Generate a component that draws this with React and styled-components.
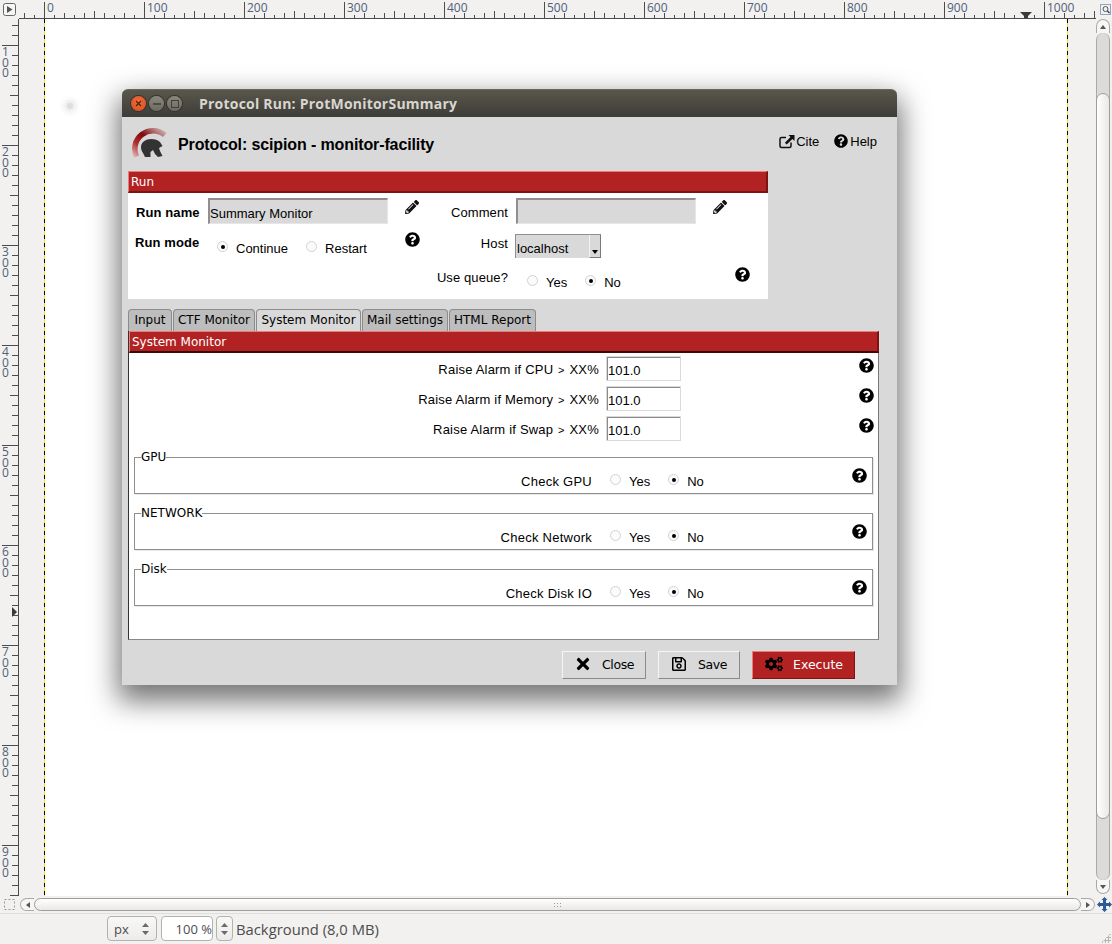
import React from "react";
import styled, { createGlobalStyle } from "styled-components";
import {
  FaPencilAlt,
  FaQuestionCircle,
  FaTimes,
  FaRegSave,
  FaCogs,
} from "react-icons/fa";

const GlobalStyle = createGlobalStyle`
  html, body { margin: 0; padding: 0; background: #f2f1f0; }
  body { font-family: "Liberation Sans", Arial, sans-serif; overflow: hidden; }
`;

const GIMP_FONT = `"Open Sans", "Noto Sans", sans-serif`;
const TK_FONT = `"DejaVu Sans", sans-serif`;
const RED = "#b22222";

const Gimp = styled.div`
  width: 1112px;
  height: 944px;
  display: flex;
  flex-direction: column;
  background: #f2f1f0;
  position: relative;
  overflow: hidden;
`;

const TopRow = styled.div`
  display: flex;
  height: 19px;
  flex: none;
`;

const CornerButton = styled.div`
  width: 19px;
  flex: none;
  display: flex;
  align-items: center;
  justify-content: center;
`;

const RulerBox = styled.div`
  flex: none;
  line-height: 0;
`;

// one digit per line, like the vertical ruler in the screenshot
const RulerDigits = styled.div`
  font: 12px/10.7px ${GIMP_FONT};
  color: #4f6078;
  word-break: break-all;
`;

const Middle = styled.div`
  display: flex;
  height: 877px;
  flex: none;
`;

const Gutter = styled.div`
  flex: none;
  width: ${({ $w }) => $w}px;
  background: #f2f1f0;
`;

const Canvas = styled.div`
  flex: none;
  width: 1024px;
  position: relative;
  background: #fff;
`;

const Guide = styled.div`
  position: absolute;
  top: 0;
  bottom: 0;
  ${({ $side }) => $side}: 0;
  width: 1px;
  background: repeating-linear-gradient(
    to bottom,
    #000 0 4px,
    #f6e500 4px 8px
  );
`;

const ShadowSpot = styled.div`
  position: absolute;
  left: 23px;
  top: 84px;
  width: 6px;
  height: 6px;
  border-radius: 50%;
  background: #dedede;
  box-shadow: 0 0 6px 3px #e4e4e4;
`;

const Window = styled.div`
  position: absolute;
  left: 78px;
  top: 70px;
  width: 775px;
  height: 596px;
  display: flex;
  flex-direction: column;
  background: #d9d9d9;
  border-radius: 6px 6px 0 0;
  box-shadow: 0 12px 28px 4px rgba(0, 0, 0, 0.55);
  color: #000;
`;

const TitleBar = styled.div`
  height: 28px;
  flex: none;
  display: flex;
  align-items: center;
  padding-left: 9px;
  background: linear-gradient(to bottom, #5a564c, #3d3c37);
  border-radius: 6px 6px 0 0;
  border-top: 1px solid #6a665b;
  box-sizing: border-box;
`;

const WinButton = styled.div`
  width: 15px;
  height: 15px;
  border-radius: 50%;
  margin-right: 3px;
  display: flex;
  align-items: center;
  justify-content: center;
  background: ${({ $close }) =>
    $close
      ? "radial-gradient(circle at 50% 40%, #f0703c, #d8481c)"
      : "linear-gradient(to bottom, #8a877d, #6d6a60)"};
  box-shadow: 0 0 0 1px #35342f;
`;

const WinTitle = styled.div`
  margin-left: 14px;
  font: bold 14px ${GIMP_FONT};
  color: #d8d6cf;
  letter-spacing: 0.22px;
`;

const Body = styled.div`
  flex: none;
  display: flex;
  flex-direction: column;
  padding: 0 18px 0 6px;
`;

const Header = styled.div`
  height: 54px;
  flex: none;
  display: flex;
  align-items: center;
  position: relative;
`;

const LogoBox = styled.div`
  margin-left: 3px;
  line-height: 0;
  svg { display: block; }
`;

const ProtocolTitle = styled.div`
  margin-left: 9px;
  font-size: 16px;
  font-weight: bold;
  letter-spacing: -0.12px;
  position: relative;
  top: 1px;
`;

const HeaderLinks = styled.div`
  margin-left: auto;
  display: flex;
  align-items: center;
  margin-right: 2px;
  margin-top: -6px;
  font-size: 13px;
  gap: 15px;
`;

const HeaderLink = styled.span`
  display: flex;
  align-items: center;
  gap: ${({ $gap }) => $gap}px;
  svg { display: block; }
`;

const RunSection = styled.div`
  width: 640px;
  flex: none;
`;

const SectionBar = styled.div`
  height: 22px;
  box-sizing: border-box;
  background: ${RED};
  border-top: 1px solid #ee7b7b;
  border-left: 1px solid #ee7b7b;
  border-bottom: 2px solid #7c1414;
  border-right: 2px solid #7c1414;
  color: #fff;
  font: 12px/20px ${TK_FONT};
  padding-left: 2px;
`;

const RunForm = styled.div`
  height: 106px;
  background: #fff;
  display: grid;
  grid-template-columns: 73px 180px 48px 80px 180px 48px;
  grid-template-rows: 33px 35px 38px;
  padding: 5px 0 0 7px;
  box-sizing: border-box;
  font-size: 13px;
`;

const Label = styled.div`
  font-weight: ${({ $bold }) => ($bold ? "bold" : "normal")};
  text-align: ${({ $left }) => ($left ? "left" : "right")};
  padding-right: ${({ $left }) => ($left ? 0 : 8)}px;
  padding-left: ${({ $indent }) => $indent || 0}px;
  padding-top: ${({ $top }) => $top || 0}px;
  white-space: nowrap;
  line-height: 15px;
  letter-spacing: 0.1px;
`;

const Entry = styled.div`
  width: 180px;
  height: 26px;
  box-sizing: border-box;
  background: #d9d9d9;
  border-top: 2px solid #8f8f8f;
  border-left: 2px solid #8f8f8f;
  border-right: 1px solid #e6e6e6;
  border-bottom: 1px solid #e6e6e6;
  font-size: 13px;
  line-height: 28px;
  white-space: nowrap;
  overflow: hidden;
`;

const ValueEntry = styled.div`
  width: 75px;
  height: 25px;
  box-sizing: border-box;
  background: #fff;
  border: 1px solid #d9d9d9;
  box-shadow: inset 1px 1px 0 #8a8a8a;
  font-size: 13px;
  line-height: 28px;
  padding-left: 1px;
  overflow: hidden;
`;

const IconCell = styled.div`
  display: flex;
  justify-content: ${({ $end }) => ($end ? "flex-end" : "center")};
  padding-top: ${({ $top }) => $top || 0}px;
  margin-right: ${({ $end }) => ($end ? -6 : 0)}px;
  svg { display: block; }
`;

const RadioGroup = styled.div`
  display: flex;
  align-items: flex-start;
  padding-left: ${({ $pad }) => $pad || 0}px;
  padding-top: ${({ $top }) => $top || 0}px;
  font-size: 13px;
`;

const RadioItem = styled.div`
  display: flex;
  align-items: center;
  margin-right: ${({ $gap }) => $gap || 0}px;
  line-height: 15px;
`;

const RadioDot = styled.span`
  width: 11px;
  height: 11px;
  box-sizing: border-box;
  border-radius: 50%;
  background: #fbfbfb;
  border: 1px solid #d2d2d2;
  margin-right: 8px;
  position: relative;
  top: -2px;
  display: block;
  flex: none;
  &::after {
    content: "";
    display: ${({ $on }) => ($on ? "block" : "none")};
    position: absolute;
    left: 2.5px;
    top: 2.5px;
    width: 4px;
    height: 4px;
    border-radius: 50%;
    background: #000;
  }
`;

const Select = styled.div`
  width: 86px;
  height: 24px;
  margin-left: -1px;
  margin-top: 3px;
  box-sizing: border-box;
  display: flex;
  background: #d9d9d9;
  border-top: 1px solid #8f8f8f;
  border-left: 1px solid #8f8f8f;
`;

const SelectText = styled.div`
  flex: 1;
  line-height: 28px;
  height: 23px;
  overflow: hidden;
  padding-left: 1px;
  font-size: 13px;
`;

const SelectButton = styled.div`
  width: 12px;
  box-sizing: border-box;
  border-left: 1px solid #f4f4f4;
  border-right: 1px solid #7a7a7a;
  border-bottom: 1px solid #7a7a7a;
  background: #d9d9d9;
  position: relative;
  &::after {
    content: "";
    position: absolute;
    left: 2px;
    bottom: 3px;
    width: 0;
    height: 0;
    border-left: 3.5px solid transparent;
    border-right: 3.5px solid transparent;
    border-top: 4px solid #000;
  }
`;

const Tabs = styled.div`
  display: flex;
  margin-top: 10px;
  height: 22px;
  flex: none;
  gap: 1px;
`;

const Tab = styled.div`
  box-sizing: border-box;
  width: ${({ $w }) => $w}px;
  height: 22px;
  text-align: center;
  font: 12px/21px ${TK_FONT};
  background: ${({ $on }) => ($on ? "#d9d9d9" : "#bdbdbd")};
  border: 1px solid #8c8c8c;
  border-bottom: none;
  border-radius: 4px 4px 0 0;
  white-space: nowrap;
`;

const Panel = styled.div`
  width: 751px;
  height: 309px;
  flex: none;
  box-sizing: border-box;
  background: #fff;
  border-left: 1px solid #333;
  border-right: 1px solid #777;
  border-bottom: 1px solid #888;
  display: flex;
  flex-direction: column;
`;

const PanelBar = styled(SectionBar)`
  margin-right: -1px;
  border-bottom: 2px solid #3c0808;
`;

const Params = styled.div`
  padding-top: 3px;
  flex: none;
`;

const ParamRow = styled.div`
  height: 30px;
  flex: none;
  display: grid;
  grid-template-columns: 477px 75px 1fr;
  font-size: 13px;
`;

const ParamLabel = styled.div`
  text-align: right;
  padding: 6px 7px 0 0;
  line-height: 15px;
  letter-spacing: 0.2px;
`;

const Gt = styled.span`
  font-size: 11px;
  margin: 0 1px;
`;

const ParamHelp = styled.div`
  display: flex;
  justify-content: flex-end;
  padding: 2px 4px 0 0;
  svg { display: block; }
`;

const Group = styled.fieldset`
  margin: ${({ $first }) => ($first ? 4 : 12)}px 5px 0 5px;
  padding: 0;
  height: 44px;
  box-sizing: border-box;
  border: 1px solid #8f8f8f;
  border-radius: 0;
  box-shadow: 1px 1px 0 #e8e8e8;
  flex: none;
`;

const GroupLegend = styled.legend`
  margin-left: 6px;
  padding: 0;
  font: 12px/15px ${TK_FONT};
`;

const GroupRow = styled.div`
  display: grid;
  grid-template-columns: 457px auto 1fr;
  font-size: 13px;
  padding-top: 9px;
`;

const GroupLabel = styled.div`
  text-align: right;
  line-height: 15px;
  letter-spacing: 0.25px;
`;

const GroupHelp = styled.div`
  display: flex;
  justify-content: flex-end;
  padding-right: 5px;
  margin-top: -6px;
  svg { display: block; }
`;

const Footer = styled.div`
  flex: none;
  display: flex;
  justify-content: flex-end;
  align-items: flex-start;
  padding: 11px 42px 0 0;
  gap: 12px;
`;

const Button = styled.div`
  display: flex;
  align-items: center;
  box-sizing: border-box;
  height: 28px;
  width: ${({ $w }) => $w}px;
  padding: 0 0 2px ${({ $pad }) => $pad}px;
  font: 12.5px ${TK_FONT};
  letter-spacing: ${({ $tight }) => ($tight ? "-0.4px" : "0")};
  background: ${({ $red }) => ($red ? RED : "#d9d9d9")};
  color: ${({ $red }) => ($red ? "#fff" : "#000")};
  border-top: 1px solid ${({ $red }) => ($red ? "#ee7b7b" : "#f5f5f5")};
  border-left: 1px solid ${({ $red }) => ($red ? "#ee7b7b" : "#f5f5f5")};
  border-bottom: 1px solid ${({ $red }) => ($red ? "#7c1414" : "#8a8a8a")};
  border-right: 1px solid ${({ $red }) => ($red ? "#7c1414" : "#8a8a8a")};
  svg {
    display: block;
    flex: none;
    color: #000;
    margin-right: ${({ $gap }) => $gap}px;
  }
`;

const VScroll = styled.div`
  width: 14px;
  flex: none;
  margin-right: 2px;
  padding-bottom: 2px;
  display: flex;
  flex-direction: column;
  box-sizing: border-box;
`;

const ScrollEnd = styled.div`
  background: #f6f6f5;
  border: 1px solid #a9a9a6;
  box-sizing: border-box;
  display: flex;
  align-items: center;
  justify-content: center;
  flex: none;
  ${({ $dir }) =>
    $dir === "up"
      ? "height: 14px; border-bottom: none; border-radius: 7px 7px 0 0;"
      : $dir === "down"
      ? "height: 14px; border-top: none; border-radius: 0 0 7px 7px;"
      : $dir === "left"
      ? "width: 14px; border-right: none; border-radius: 7px 0 0 7px;"
      : "width: 14px; border-left: none; border-radius: 0 7px 7px 0;"}
`;

const Arrow = styled.span`
  width: 0;
  height: 0;
  display: block;
  ${({ $dir }) =>
    $dir === "up"
      ? "border-left: 3.5px solid transparent; border-right: 3.5px solid transparent; border-bottom: 4px solid #555;"
      : $dir === "down"
      ? "border-left: 3.5px solid transparent; border-right: 3.5px solid transparent; border-top: 4px solid #555;"
      : $dir === "left"
      ? "border-top: 3.5px solid transparent; border-bottom: 3.5px solid transparent; border-right: 4px solid #555;"
      : "border-top: 3.5px solid transparent; border-bottom: 3.5px solid transparent; border-left: 4px solid #555;"}
`;

const VTrack = styled.div`
  flex: 1;
  display: flex;
  flex-direction: column;
  background: #dcdbd9;
  border-left: 1px solid #a9a9a6;
  border-right: 1px solid #a9a9a6;
  border-radius: 7px;
`;

const VThumb = styled.div`
  margin: ${({ $top }) => $top}px -1px ${({ $bottom }) => $bottom}px;
  flex: 1;
  background: linear-gradient(to right, #ffffff, #e9e8e6);
  border: 1px solid #9e9e9b;
  border-radius: 7px;
`;

const BottomRow = styled.div`
  display: flex;
  align-items: center;
  height: 17px;
  flex: none;
  border-bottom: 1px solid #dededc;
`;

const HScroll = styled.div`
  display: flex;
  width: 1075px;
  height: 13px;
  margin-left: 1px;
`;

const HThumb = styled.div`
  flex: 1;
  background: linear-gradient(to bottom, #ffffff, #e9e8e6);
  border: 1px solid #9e9e9b;
  border-radius: 7px;
  display: flex;
  align-items: center;
  justify-content: center;
`;

const Grip = styled.span`
  width: 9px;
  height: 5px;
  background-image: radial-gradient(circle, #9a9a98 1px, transparent 1px);
  background-size: 3px 3px;
`;

const CornerIcon = styled.div`
  margin: 0 4px;
  line-height: 0;
`;

const NavIcon = styled.div`
  margin-left: 2px;
  line-height: 0;
`;

const StatusBar = styled.div`
  flex: 1;
  display: flex;
  align-items: center;
  padding: 0 0 1px 107px;
  font: 14.8px ${GIMP_FONT};
  color: #4c4c4c;
  position: relative;
`;

const Combo = styled.div`
  width: ${({ $w }) => $w}px;
  height: 25px;
  box-sizing: border-box;
  border: 1px solid #b4b2ae;
  border-radius: 4px;
  background: ${({ $plain }) =>
    $plain ? "#fff" : "linear-gradient(to bottom, #f8f8f7, #ecebe9)"};
  margin-right: ${({ $gap }) => $gap || 0}px;
  display: flex;
  align-items: center;
  justify-content: ${({ $center }) => ($center ? "center" : "space-between")};
  padding: ${({ $center, $plain }) =>
    $center ? "0" : $plain ? "0" : "0 7px 0 6px"};
  font-size: 13px;
  color: #4c4c4c;
  flex: none;
`;

const ZoomValue = styled.span`
  margin-left: auto;
`;

const SpinArrows = styled.div`
  display: flex;
  flex-direction: column;
  gap: 4px;
`;

const StatusText = styled.span`
  margin-left: 3px;
  white-space: nowrap;
`;

const ResizeGrip = styled.div`
  position: absolute;
  right: 1px;
  bottom: 1px;
  width: 10px;
  height: 10px;
  background-image: radial-gradient(circle, #b5b4b1 1px, transparent 1.2px);
  background-size: 3px 3px;
  clip-path: polygon(100% 0, 100% 100%, 0 100%);
`;

const HelpIcon = ({ size = 15 }) => <FaQuestionCircle size={size} color="#000" />;
const Pencil = () => <FaPencilAlt size={14} color="#111" />;

function Radio({ on, label, gap }) {
  return (
    <RadioItem $gap={gap}>
      <RadioDot $on={on} />
      {label}
    </RadioItem>
  );
}

function TopRuler() {
  const ticks = [];
  for (let x = 24; x < 1096; x += 10) {
    const value = x - 44;
    const major = value % 100 === 0;
    const mid = value % 50 === 0;
    const top = major ? 2 : mid ? 11 : value % 20 === 0 ? 13 : 15;
    ticks.push(<line key={x} x1={x - 18.5} x2={x - 18.5} y1={top} y2={18} stroke="#4c4c4c" />);
    if (major) {
      ticks.push(
        <text key={`t${x}`} x={x - 16} y={12} fontFamily={GIMP_FONT} fontSize="12" fill="#4f6078">
          {value}
        </text>
      );
    }
  }
  return (
    <svg width="1077" height="19">
      {ticks}
      <line x1="0" x2="1077" y1="18.5" y2="18.5" stroke="#4c4c4c" />
      <path d="M1001 12h12l-4 4v2h-4v-2z" fill="#3a3a3a" />
    </svg>
  );
}

function LeftRuler() {
  const items = [];
  for (let y = 6; y < 877; y += 10) {
    const value = y + 74;
    const major = value % 100 === 0;
    const mid = value % 50 === 0;
    const left = major ? 2 : mid ? 10 : 12;
    items.push(<line key={y} x1={left} x2={18} y1={y + 0.5} y2={y + 0.5} stroke="#4c4c4c" />);
    if (major) {
      items.push(
        <foreignObject key={`t${y}`} x={2} y={y + 2} width={8} height={34}>
          <RulerDigits>{value}</RulerDigits>
        </foreignObject>
      );
    }
  }
  return (
    <svg width="19" height="877">
      {items}
      <line x1="18.5" x2="18.5" y1="0" y2="877" stroke="#4c4c4c" />
      <path d="M12 588l5 5-5 5z" fill="#3a3a3a" />
    </svg>
  );
}

function Logo() {
  return (
    <svg width="38" height="36" viewBox="0 0 38 36">
      <defs>
        <linearGradient id="arc" x1="0" y1="1" x2="1" y2="0">
          <stop offset="0" stopColor="#ecd2d2" />
          <stop offset="0.3" stopColor="#b03030" />
          <stop offset="0.55" stopColor="#7f0a0a" />
          <stop offset="0.8" stopColor="#b87c7c" />
          <stop offset="1" stopColor="#cfcfcf" />
        </linearGradient>
      </defs>
      <path d="M3 31.900A21 21 0 0 1 35.500 6.900L32 11.100A15.500 15.500 0 0 0 8 29.500z" fill="url(#arc)" />
      <path
        d="M10 21C10 16 15 13 20 13C24 13 27 14 29 16L31.500 20L28 22L29 25L31.500 30L27 31L24 28L22 24L19.500 26L19.500 31L14 31L12 27C10.500 25 10 23 10 21z"
        fill="#333"
      />
    </svg>
  );
}

function ExternalLink() {
  return (
    <svg width="16" height="15" viewBox="0 0 16 15">
      <path d="M7 3.500H2.500a1.500 1.500 0 0 0-1.500 1.500v7a1.500 1.500 0 0 0 1.500 1.500h8a1.500 1.500 0 0 0 1.500-1.500V8.500" fill="none" stroke="#111" strokeWidth="1.500" />
      <path d="M9.500 1H15.500V7L13.400 4.900 7.700 10.500 5.900 8.700 11.500 3z" fill="#111" />
    </svg>
  );
}

function SmallArrow({ up }) {
  return (
    <svg width="7" height="4" viewBox="0 0 7 4">
      <path d={up ? "M3.500 0L7 4H0z" : "M0 0h7L3.500 4z"} fill="#6a6a6a" />
    </svg>
  );
}

function MoveIcon() {
  return (
    <svg width="15" height="15" viewBox="0 0 15 15">
      <path
        d="M7.500 0l3 3H9v3h3V4.500l3 3-3 3V9H9v3h1.500l-3 3-3-3H6V9H3v1.500l-3-3 3-3V6h3V3H4.500z"
        fill="#2c5a96"
      />
    </svg>
  );
}

function PlayBox() {
  return (
    <svg width="13" height="13" viewBox="0 0 13 13">
      <rect x=".5" y=".5" width="12" height="12" rx="2" fill="#f6f6f5" stroke="#666" />
      <path d="M4 3l5.500 3.500L4 10z" fill="#555" />
    </svg>
  );
}

function ZoomBox() {
  return (
    <svg width="11" height="11" viewBox="0 0 11 11">
      <rect x=".5" y=".5" width="10" height="10" fill="none" stroke="#2c5a96" strokeDasharray="1 1" />
      <circle cx="5.500" cy="5" r="2.500" fill="none" stroke="#555" />
      <path d="M7.500 7l2 2" stroke="#333" strokeWidth="1.300" />
    </svg>
  );
}

function DashedBox() {
  return (
    <svg width="11" height="11" viewBox="0 0 11 11">
      <rect x=".5" y=".5" width="10" height="10" fill="none" stroke="#999" strokeDasharray="2 2" />
    </svg>
  );
}

function ParamLine({ name }) {
  return (
    <ParamRow>
      <ParamLabel>
        Raise Alarm if {name} <Gt>&gt;</Gt> XX%
      </ParamLabel>
      <ValueEntry>101.0</ValueEntry>
      <ParamHelp>
        <HelpIcon />
      </ParamHelp>
    </ParamRow>
  );
}

function GroupBox({ title, label, first }) {
  return (
    <Group $first={first}>
      <GroupLegend>{title}</GroupLegend>
      <GroupRow>
        <GroupLabel>{label}</GroupLabel>
        <RadioGroup $pad={18}>
          <Radio label="Yes" gap={18} />
          <Radio on label="No" />
        </RadioGroup>
        <GroupHelp>
          <HelpIcon />
        </GroupHelp>
      </GroupRow>
    </Group>
  );
}

export default function App() {
  return (
    <>
      <GlobalStyle />
      <Gimp>
        <TopRow>
          <CornerButton>
            <PlayBox />
          </CornerButton>
          <RulerBox>
            <TopRuler />
          </RulerBox>
          <CornerButton>
            <ZoomBox />
          </CornerButton>
        </TopRow>
        <Middle>
          <RulerBox>
            <LeftRuler />
          </RulerBox>
          <Gutter $w={25} />
          <Canvas>
            <Guide $side="left" />
            <Guide $side="right" />
            <ShadowSpot />
            <Window>
              <TitleBar>
                <WinButton $close>
                  <svg width="7" height="7" viewBox="0 0 7 7">
                    <path d="M1 1l5 5M6 1L1 6" stroke="#4a2110" strokeWidth="1.200" />
                  </svg>
                </WinButton>
                <WinButton>
                  <svg width="8" height="2" viewBox="0 0 8 2">
                    <path d="M0 1h8" stroke="#3f3e38" strokeWidth="1.500" />
                  </svg>
                </WinButton>
                <WinButton>
                  <svg width="8" height="8" viewBox="0 0 8 8">
                    <rect x=".5" y=".5" width="7" height="7" fill="none" stroke="#3f3e38" />
                  </svg>
                </WinButton>
                <WinTitle>Protocol Run: ProtMonitorSummary</WinTitle>
              </TitleBar>
              <Body>
                <Header>
                  <LogoBox>
                    <Logo />
                  </LogoBox>
                  <ProtocolTitle>Protocol: scipion - monitor-facility</ProtocolTitle>
                  <HeaderLinks>
                    <HeaderLink $gap={1}>
                      <ExternalLink />
                      Cite
                    </HeaderLink>
                    <HeaderLink $gap={2}>
                      <HelpIcon size={14} />
                      Help
                    </HeaderLink>
                  </HeaderLinks>
                </Header>
                <RunSection>
                  <SectionBar>Run</SectionBar>
                  <RunForm>
                    <Label $bold $left $indent={1} $top={7}>Run name</Label>
                    <Entry>Summary Monitor</Entry>
                    <IconCell $top={2}>
                      <Pencil />
                    </IconCell>
                    <Label $top={7}>Comment</Label>
                    <Entry />
                    <IconCell $top={2}>
                      <Pencil />
                    </IconCell>

                    <Label $bold $left $top={4}>Run mode</Label>
                    <RadioGroup $pad={9} $top={10}>
                      <Radio on label="Continue" gap={18} />
                      <Radio label="Restart" />
                    </RadioGroup>
                    <IconCell $top={1}>
                      <HelpIcon />
                    </IconCell>
                    <Label $top={5}>Host</Label>
                    <Select>
                      <SelectText>localhost</SelectText>
                      <SelectButton />
                    </Select>
                    <div />

                    <div />
                    <div />
                    <div />
                    <Label $top={4}>Use queue?</Label>
                    <RadioGroup $pad={11} $top={9}>
                      <Radio label="Yes" gap={18} />
                      <Radio on label="No" />
                    </RadioGroup>
                    <IconCell $end $top={1}>
                      <HelpIcon />
                    </IconCell>
                  </RunForm>
                </RunSection>
                <Tabs>
                  <Tab $w={44}>Input</Tab>
                  <Tab $w={82}>CTF Monitor</Tab>
                  <Tab $on $w={105}>System Monitor</Tab>
                  <Tab $w={86}>Mail settings</Tab>
                  <Tab $w={87}>HTML Report</Tab>
                </Tabs>
                <Panel>
                  <PanelBar>System Monitor</PanelBar>
                  <Params>
                    <ParamLine name="CPU" />
                    <ParamLine name="Memory" />
                    <ParamLine name="Swap" />
                  </Params>
                  <GroupBox first title="GPU" label="Check GPU" />
                  <GroupBox title="NETWORK" label="Check Network" />
                  <GroupBox title="Disk" label="Check Disk IO" />
                </Panel>
              </Body>
              <Footer>
                <Button $tight $w={84} $pad={11} $gap={10}>
                  <FaTimes size={18} />
                  Close
                </Button>
                <Button $tight $w={82} $pad={12} $gap={11}>
                  <FaRegSave size={16} />
                  Save
                </Button>
                <Button $red $w={103} $pad={12} $gap={10}>
                  <FaCogs size={18} />
                  Execute
                </Button>
              </Footer>
            </Window>
          </Canvas>
          <Gutter $w={28} />
          <VScroll>
            <ScrollEnd $dir="up">
              <Arrow $dir="up" />
            </ScrollEnd>
            <VTrack>
              <VThumb $top={60} $bottom={61} />
            </VTrack>
            <ScrollEnd $dir="down">
              <Arrow $dir="down" />
            </ScrollEnd>
          </VScroll>
        </Middle>
        <BottomRow>
          <CornerIcon>
            <DashedBox />
          </CornerIcon>
          <HScroll>
            <ScrollEnd $dir="left">
              <Arrow $dir="left" />
            </ScrollEnd>
            <HThumb>
              <Grip />
            </HThumb>
            <ScrollEnd $dir="right">
              <Arrow $dir="right" />
            </ScrollEnd>
          </HScroll>
          <NavIcon>
            <MoveIcon />
          </NavIcon>
        </BottomRow>
        <StatusBar>
          <Combo $w={50} $gap={4}>
            px
            <SpinArrows>
              <SmallArrow up />
              <SmallArrow />
            </SpinArrows>
          </Combo>
          <Combo $plain $w={52} $gap={3}>
            <ZoomValue>100 %</ZoomValue>
          </Combo>
          <Combo $w={17} $center>
            <SpinArrows>
              <SmallArrow up />
              <SmallArrow />
            </SpinArrows>
          </Combo>
          <StatusText>Background (8,0 MB)</StatusText>
          <ResizeGrip />
        </StatusBar>
      </Gimp>
    </>
  );
}
